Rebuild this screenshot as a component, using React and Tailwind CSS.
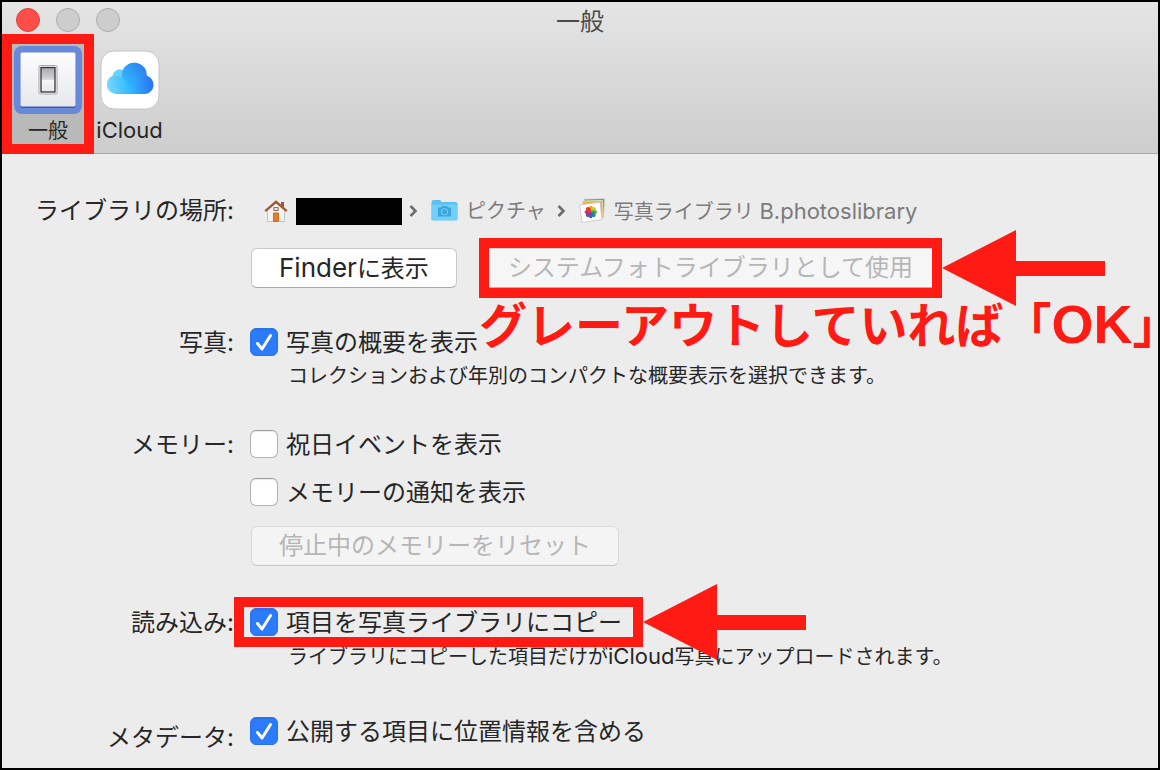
import React from 'react';

const Arrow = () => (
  <svg
    className="absolute left-full top-1/2 -translate-y-1/2 w-[163px] h-[76px] pointer-events-none"
    viewBox="0 0 163 76"
    fill="#ff1a14"
  >
    <path d="M0 38L74 0v31h89v15H74v30z" />
  </svg>
);

const Chevron = () => (
  <svg className="w-[10px] h-4 ml-[7px] mr-3 shrink-0" viewBox="0 0 10 16" fill="none">
    <path d="M1.5 3l5 5-5 5" stroke="#6e6e6e" strokeWidth="2.6" />
  </svg>
);

const HomeIcon = () => (
  <svg className="w-6 h-6 shrink-0" viewBox="0 0 24 24">
    <path d="M17 3h3v5h-3z" fill="#9a5a34" />
    <path d="M3.500 11L12 4l8.500 7v11.500h-17z" fill="#f3f3f3" stroke="#b9b9b9" strokeWidth="0.8" />
    <path d="M1.200 12.200L12 2.800l10.800 9.400" fill="none" stroke="#9a5a34" strokeWidth="2.200" />
    <path d="M9.800 8.500h4.400v3h-4.400z" fill="#d9e2ea" stroke="#9a6a4a" strokeWidth="1" />
    <path d="M9.500 14h5v8.500h-5z" fill="#ee7a22" stroke="#b85a1c" strokeWidth="0.8" />
  </svg>
);

const FolderIcon = () => (
  <svg className="w-[27px] h-6 shrink-0" viewBox="0 0 27 24">
    <path d="M0.5 3q0-2 2-2h6q1 0 1.500 1l0.500 1h14q2 0 2 2v15q0 1.500-1.500 1.500h-23Q0.500 21.500 0.500 20z" fill="#5ec0ea" />
    <path d="M0.500 5.500h26v14.500q0 1-1.500 1h-23Q0.500 21 0.500 20z" fill="#70d0f9" />
    <path d="M7 8.500h3l1-1.500h5l1 1.500h3v9H7z" fill="#3ba6dc" />
    <circle cx="13.500" cy="12.800" r="3.200" fill="none" stroke="#7ad2f8" strokeWidth="1" />
  </svg>
);

const PhotosIcon = () => (
  <svg className="w-[27px] h-[27px] shrink-0" viewBox="0 0 27 27">
    <path d="M5 1.200l20.500-0.400-0.800 19-20-1z" fill="#4f9d62" stroke="#c9d6c9" strokeWidth="0.6" />
    <path d="M3 3l20.500-0.500 0.800 18-20 1z" fill="#efb04a" stroke="#f4efe4" strokeWidth="0.8" />
    <path d="M0.600 7L21 4.200l2 17.300L3.200 24.500z" fill="#fff" stroke="#c4c4c4" strokeWidth="0.8" />
    <g transform="translate(11.800 14)">
      <ellipse cy="-3.200" rx="2.100" ry="3" fill="#f5a11c" />
      <ellipse cy="-3.200" rx="2.100" ry="3" fill="#c9cc24" transform="rotate(45)" />
      <ellipse cy="-3.200" rx="2.100" ry="3" fill="#5fae3c" transform="rotate(90)" />
      <ellipse cy="-3.200" rx="2.100" ry="3" fill="#1f9480" transform="rotate(135)" />
      <ellipse cy="-3.200" rx="2.100" ry="3" fill="#3468c0" transform="rotate(180)" />
      <ellipse cy="-3.200" rx="2.100" ry="3" fill="#7344a4" transform="rotate(225)" />
      <ellipse cy="-3.200" rx="2.100" ry="3" fill="#c4307c" transform="rotate(270)" />
      <ellipse cy="-3.200" rx="2.100" ry="3" fill="#ea3a28" transform="rotate(315)" />
    </g>
  </svg>
);

const SwitchIcon = () => (
  <svg className="w-[68px] h-[68px]" viewBox="0 0 68 68">
    <defs>
      <linearGradient id="plate" x1="0" y1="0" x2="0" y2="1">
        <stop offset="0" stopColor="#fdfdfd" />
        <stop offset="1" stopColor="#e6e8ec" />
      </linearGradient>
      <linearGradient id="rocker" x1="0" y1="0" x2="0" y2="1">
        <stop offset="0" stopColor="#a9a9ab" />
        <stop offset="0.480" stopColor="#d4d4d6" />
        <stop offset="0.520" stopColor="#f5f5f5" />
        <stop offset="1" stopColor="#e8e8e8" />
      </linearGradient>
    </defs>
    <rect width="68" height="68" rx="8" fill="#6888d9" />
    <rect x="6.500" y="7" width="55" height="55" rx="1.500" fill="#3d5cab" />
    <rect x="6.500" y="6.500" width="55" height="54" rx="1.500" fill="url(#plate)" />
    <rect x="25" y="19.500" width="18" height="28.500" rx="1.500" fill="#fff" stroke="#a4a4a4" strokeWidth="1" />
    <rect x="27" y="21.500" width="14" height="24.500" fill="url(#rocker)" stroke="#333" strokeWidth="1.300" />
  </svg>
);

const CloudIcon = () => (
  <svg className="w-[60px] h-[60px]" viewBox="0 0 60 60">
    <defs>
      <linearGradient id="cloud" x1="6" y1="38" x2="54" y2="32" gradientUnits="userSpaceOnUse">
        <stop offset="0" stopColor="#7fd6fa" />
        <stop offset="0.450" stopColor="#2fbcff" />
        <stop offset="1" stopColor="#2c6bf2" />
      </linearGradient>
      <linearGradient id="puff" x1="24" y1="40" x2="42" y2="14" gradientUnits="userSpaceOnUse">
        <stop offset="0" stopColor="#33bffe" />
        <stop offset="1" stopColor="#2a7df0" />
      </linearGradient>
    </defs>
    <rect x="1" y="1" width="58" height="58" rx="13" fill="#fff" stroke="#c4c4c4" strokeWidth="1" />
    <g transform="translate(0.8 0)">
      <path
        d="M15.500 44a9.500 9.500 0 0 1-3.600-18.300A7 7 0 0 1 22 20.300A12.500 12.500 0 0 1 46 25.800A9.300 9.300 0 0 1 44.500 44z"
        fill="url(#cloud)"
      />
      <path d="M22 20.300A12.500 12.500 0 0 1 46 25.800Q38 26 35 36Q26 34 21 26z" fill="url(#puff)" opacity="0.7" />
      <path d="M11.900 25.700A7 7 0 0 1 22 20.300Q20 24 21.500 28Q17 24.500 11.900 25.700z" fill="#7fdcf5" opacity="0.5" />
    </g>
  </svg>
);

const CheckRow = ({ label, defaultChecked, children }) => (
  <div className="relative w-fit">
    <label className="relative flex items-center gap-2 h-7 whitespace-nowrap">
      <input
        type="checkbox"
        defaultChecked={defaultChecked}
        className="peer appearance-none w-7 h-7 shrink-0 rounded-md bg-white border border-[#b2b2b2] border-t-[#9c9c9c] shadow-[inset_0_1px_1px_rgba(0,0,0,0.08)] checked:bg-[#2b7bfa] checked:border-[#2b72ee]"
      />
      <svg
        className="absolute left-0 top-0 w-7 h-7 invisible peer-checked:visible pointer-events-none"
        viewBox="0 0 28 28"
        fill="none"
      >
        <path
          d="M7.500 15.500l4.500 5.500L20.500 7.500"
          stroke="#fff"
          strokeWidth="3"
          strokeLinecap="round"
          strokeLinejoin="round"
        />
      </svg>
      <span className="pt-0.5">{label}</span>
    </label>
    {children}
  </div>
);

const Section = ({ title, className = '', children }) => (
  <section className={`grid grid-cols-[232px_1fr] gap-x-4 ${className}`}>
    <h2 className="pt-px text-right whitespace-nowrap">{title}</h2>
    <div className="min-w-0">{children}</div>
  </section>
);

const Hint = ({ children }) => (
  <p className="mt-1.5 pl-[38px] text-[20px] whitespace-nowrap">{children}</p>
);

const App = () => {
  return (
    <div className="min-h-screen overflow-hidden border-2 border-black bg-[#ececec] text-[#262626] text-[24px] leading-7 font-[Inter,'Noto_Sans_CJK_JP',sans-serif]">
      <header className="bg-linear-to-b from-[#e5e5e5] to-[#cdcdcd] border-b border-[#a6a6a6]">
        <div className="grid grid-cols-[1fr_auto_1fr] items-center h-8 pt-0.5 px-[14px]">
          <div className="flex gap-4">
            <button aria-label="閉じる" className="w-6 h-6 rounded-full bg-[#fe4e49] border border-[#e0443f]" />
            <button aria-label="しまう" className="w-6 h-6 rounded-full bg-[#cdcdcd] border border-[#ababab]" />
            <button aria-label="拡大" className="w-6 h-6 rounded-full bg-[#cdcdcd] border border-[#ababab]" />
          </div>
          <h1 className="pt-1 text-[#4a4a4a]">一般</h1>
        </div>

        <nav className="flex text-[20px] leading-6">
          <button className="relative w-[92px] h-[119px] pt-3 flex flex-col items-center gap-[5px] bg-[#b9b9b9]">
            <SwitchIcon />
            <span>一般</span>
            <span className="absolute inset-x-0 top-0 -bottom-px border-[10px] border-[#ff1a14]" />
          </button>
          <button className="w-[71px] pt-4 flex flex-col items-center gap-2 text-[22px]">
            <CloudIcon />
            <span>iCloud</span>
          </button>
        </nav>
      </header>

      <main className="flex flex-col gap-10 pt-[42px] pb-2">
        <Section title="ライブラリの場所:">
          <div className="flex items-center h-7 pl-[14px] pt-0.5 text-[20px] text-[#7b7b7b] whitespace-nowrap">
            <a href="#home" className="flex items-center gap-2">
              <HomeIcon />
              <span className="w-[106px] h-[27px] bg-black" />
            </a>
            <Chevron />
            <a href="#pictures" className="flex items-center gap-2 pr-1">
              <FolderIcon />
              ピクチャ
            </a>
            <Chevron />
            <a href="#library" className="flex items-center gap-2">
              <PhotosIcon />
              <span>
                写真ライブラリ <span className="text-[22px]">B.photoslibrary</span>
              </span>
            </a>
          </div>
          <div className="flex gap-[22px] mt-6 pl-px whitespace-nowrap">
            <button className="h-10 px-[27px] rounded-md bg-white border border-[#c9c9c9] border-b-[#a8a8a8]">
              <span className="text-[26px]">Finder</span>に表示
            </button>
            <div className="relative">
              <button disabled className="h-10 px-7 rounded-md bg-[#f6f6f6] border border-[#cfcfcf] border-b-[#b5b5b5] text-[#b6b6b6]">
                システムフォトライブラリとして使用
              </button>
              <div className="absolute inset-x-0 -inset-y-[10px] border-[10px] border-[#ff1a14] pointer-events-none" />
              <Arrow />
              <p className="absolute left-0 top-full mt-1.5 text-[48px] leading-[60px] font-bold text-[#ff1a14]">
                グレーアウトしていれば「
                <span className="font-['Liberation_Sans'] text-[54px]">OK</span>
                <span className="[font-feature-settings:'halt']">」</span>
              </p>
            </div>
          </div>
        </Section>

        <Section title="写真:">
          <CheckRow label="写真の概要を表示" defaultChecked />
          <Hint>コレクションおよび年別のコンパクトな概要表示を選択できます。</Hint>
        </Section>

        <Section title="メモリー:">
          <div className="flex flex-col gap-5">
            <CheckRow label="祝日イベントを表示" />
            <CheckRow label="メモリーの通知を表示" />
            <button
              disabled
              className="w-fit h-10 ml-px px-[27px] mb-0.5 rounded-md bg-[#f4f4f4] border border-[#d9d9d9] border-b-[#c4c4c4] text-[#b6b6b6] whitespace-nowrap"
            >
              停止中のメモリーをリセット
            </button>
          </div>
        </Section>

        <Section title="読み込み:">
          <CheckRow label="項目を写真ライブラリにコピー" defaultChecked>
            <div className="absolute -left-4 -right-[21px] -inset-y-[11px] border-[10px] border-[#ff1a14] pointer-events-none">
              <div className="absolute left-full top-1/2 ml-[10px]">
                <Arrow />
              </div>
            </div>
          </CheckRow>
          <Hint>
            ライブラリにコピーした項目だけが<span className="text-[22px]">iCloud</span>写真にアップロードされます。
          </Hint>
        </Section>

        <Section title={<span className="block pt-1.5">メタデータ:</span>} className="pt-1.5">
          <CheckRow label="公開する項目に位置情報を含める" defaultChecked />
        </Section>
      </main>
    </div>
  );
};

export default App;
